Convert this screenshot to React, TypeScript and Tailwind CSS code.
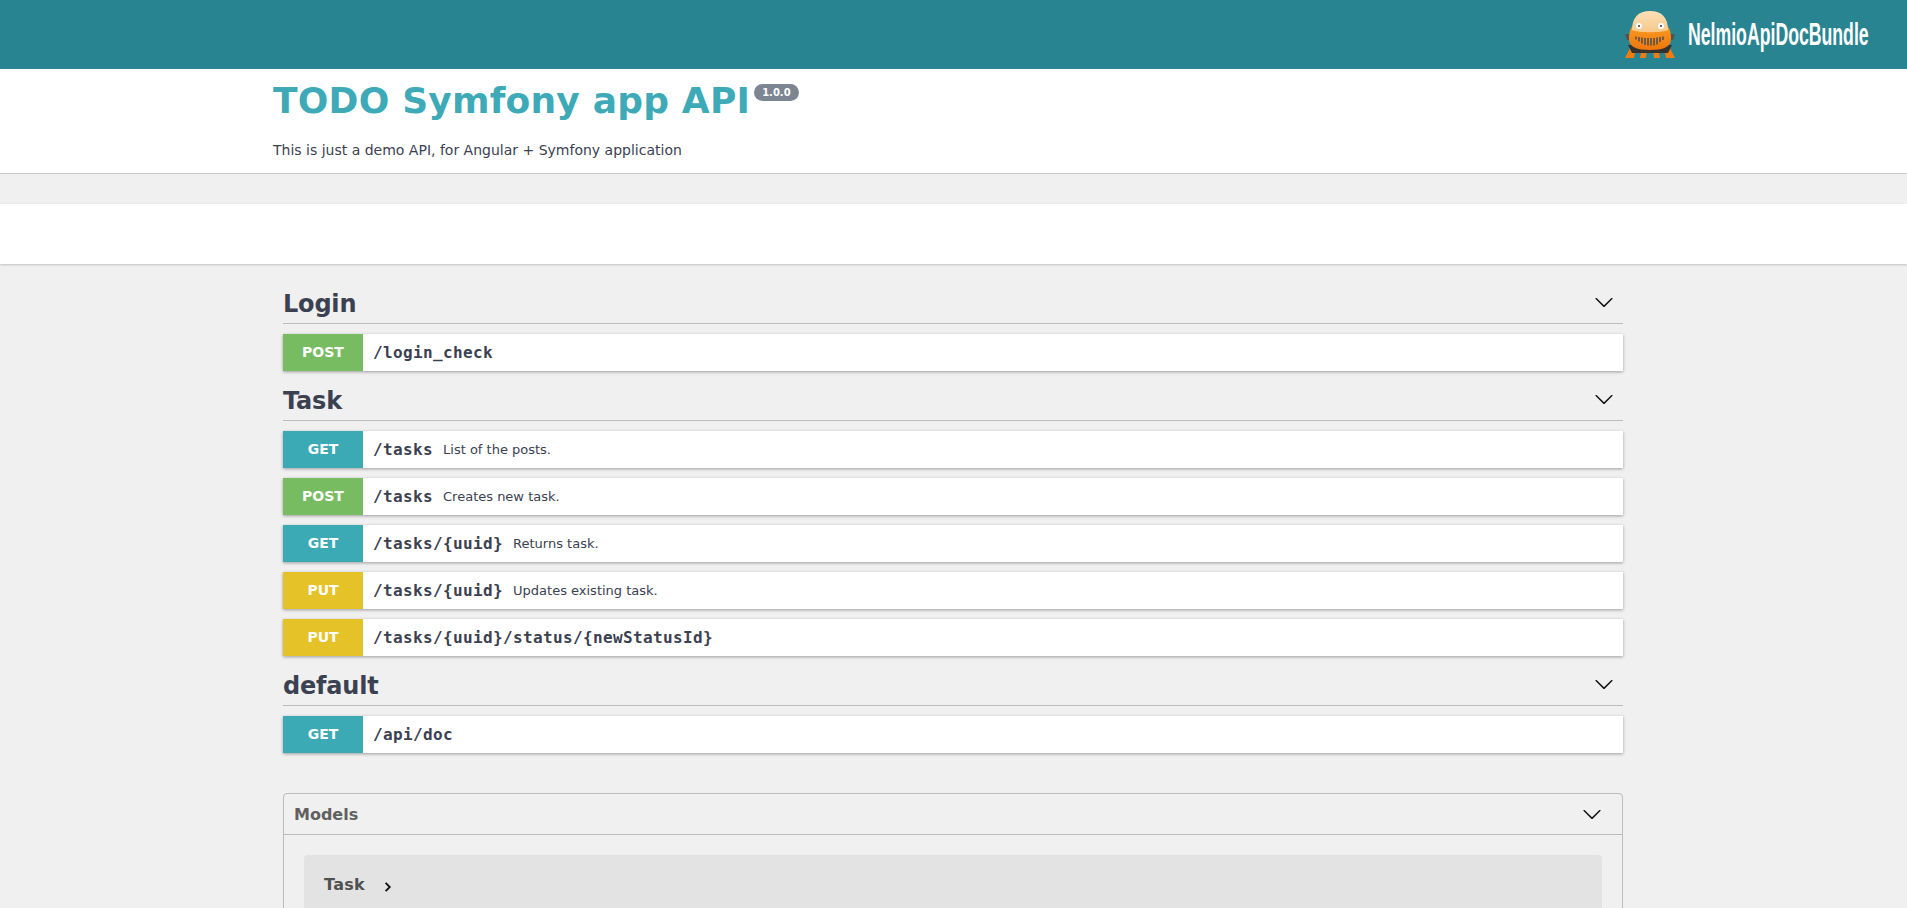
const sans = "font-['DejaVu_Sans',sans-serif]";

const methodColors: Record<string, string> = {
  GET: "bg-[#3caab5]",
  POST: "bg-[#78bc61]",
  PUT: "bg-[#e6c229]",
};

const sections = [
  {
    name: "Login",
    rows: [{ method: "POST", path: "/login_check" }],
  },
  {
    name: "Task",
    rows: [
      { method: "GET", path: "/tasks", summary: "List of the posts." },
      { method: "POST", path: "/tasks", summary: "Creates new task." },
      { method: "GET", path: "/tasks/{uuid}", summary: "Returns task." },
      { method: "PUT", path: "/tasks/{uuid}", summary: "Updates existing task." },
      { method: "PUT", path: "/tasks/{uuid}/status/{newStatusId}" },
    ],
  },
  {
    name: "default",
    rows: [{ method: "GET", path: "/api/doc" }],
  },
];

function Chevron({ className }: { className?: string }) {
  return (
    <svg viewBox="0 0 20 20" className={className} fill="currentColor">
      <path d="M17.418 6.109c.272-.268.709-.268.979 0s.271.701 0 .969l-7.908 7.83c-.27.268-.707.268-.979 0l-7.908-7.83c-.27-.268-.27-.701 0-.969.271-.268.709-.268.979 0L10 13.25l7.418-7.141z" />
    </svg>
  );
}

function Logo() {
  return (
    <svg viewBox="0 0 50 47" className="h-[47px] w-[50px]">
      <defs>
        <linearGradient id="head" x1="0" y1="0" x2="0" y2="1">
          <stop offset="0" stopColor="#fbe0b8" />
          <stop offset="1" stopColor="#f6c88a" />
        </linearGradient>
        <linearGradient id="body" x1="0" y1="0" x2="0" y2="1">
          <stop offset="0" stopColor="#fb9c22" />
          <stop offset="1" stopColor="#ee760c" />
        </linearGradient>
      </defs>
      {/* legs */}
      <path d="M0 47l5-10h6l-2 10zM15 47l2-10h5l-1 10zM29 47l-1-10h5l2 10zM41 47l-2-10h6l5 10z" fill="#f07c10" />
      <path d="M3 34h44l-4 8H7z" fill="#33322f" />
      {/* arms */}
      <path d="M0 23h7v6H2zM50 23h-7v6h5z" fill="#55534e" />
      {/* body and head */}
      <path d="M4 28c0-8 2-12 5-14h32c3 2 5 6 5 14 0 8-8 11-21 11S4 36 4 28z" fill="url(#body)" />
      <path d="M7 19C7 7 13 0 25 0s18 7 18 19c-6 3-30 3-36 0z" fill="url(#head)" />
      <circle cx="14" cy="15" r="3" fill="#fff" />
      <circle cx="36" cy="15" r="3" fill="#fff" />
      <circle cx="14" cy="15" r="1.1" fill="#444" />
      <circle cx="36" cy="15" r="1.1" fill="#444" />
      {/* grille */}
      <path
        d="M11 25.500v3M14 26v4.500M17 26.500v6M20 27v7M23 27v7.500M26 27v7.500M29 27v7.500M32 26.500v7M35 26v5M38 25.500v3.500"
        stroke="#57504a"
        strokeWidth="1.6"
      />
    </svg>
  );
}

function OperationRow({ method, path, summary }: { method: string; path: string; summary?: string }) {
  return (
    <div className="mb-[10px] flex h-[37px] items-center bg-white shadow-[0_1px_3px_rgba(0,0,0,0.35)]">
      <div
        className={`flex h-full w-[80px] items-center justify-center text-[14px] font-bold text-white ${methodColors[method]}`}
      >
        {method}
      </div>
      <span className="ml-[10px] font-['DejaVu_Sans_Mono',monospace] text-[16px] font-bold tracking-[0.37px] text-[#3b4151]">
        {path}
      </span>
      {summary && <span className="ml-[10px] text-[13px] text-[#3b4151]">{summary}</span>}
    </div>
  );
}

export default function App() {
  return (
    <div className={`h-[908px] overflow-hidden bg-[#f0f0f0] ${sans}`}>
      <header className="flex h-[69px] items-center justify-end bg-[#288490] pr-[40px] shadow-[0_1px_2px_rgba(0,0,0,0.3)]">
        <Logo />
        <div className="ml-[13px] w-[179px]">
          <span className="block origin-left scale-x-[0.57] whitespace-nowrap font-['Liberation_Sans_Narrow','Liberation_Sans',sans-serif] text-[31px] leading-none font-bold text-white">
            NelmioApiDocBundle
          </span>
        </div>
      </header>

      <section className="h-[105px] border-b border-[#c8c8c8] bg-white">
        <div className="ml-[273px]">
          <div className="flex items-start pt-[9px]">
            <h1 className="text-[36px] leading-[45px] font-bold tracking-[0.2px] text-[#3eaab7]">
              TODO Symfony app API
            </h1>
            <span className="mt-[6px] ml-[4px] flex h-[17px] items-center rounded-[57px] bg-[#7d8492] px-[8px] text-[10px] font-bold text-white">
              1.0.0
            </span>
          </div>
          <p className="mt-[17px] text-[14px] leading-[20px] text-[#3b4151]">
            This is just a demo API, for Angular + Symfony application
          </p>
        </div>
      </section>

      <div className="mt-[30px] h-[60px] bg-white shadow-[0_1px_2px_rgba(0,0,0,0.2)]" />

      <main className="ml-[283px] w-[1340px] pt-[20px]">
        {sections.map((section) => (
          <div key={section.name}>
            <div className="mb-[10px] flex h-[40px] items-center justify-between border-b border-[#bcbcbe] pr-[9px] text-[#3b4151]">
              <h3 className="text-[24px] leading-[32px] font-bold tracking-[-0.2px]">{section.name}</h3>
              <Chevron className="mb-[3px] h-[20px] w-[20px] text-[#111]" />
            </div>
            {section.rows.map((row, i) => (
              <OperationRow key={i} {...row} />
            ))}
          </div>
        ))}

        <div className="mt-[40px] rounded-[4px] border border-[#bcbcbe]">
          <div className="flex h-[41px] items-center justify-between border-b border-[#bcbcbe] pr-[20px] pl-[10px]">
            <h4 className="mt-[2px] text-[16px] font-bold text-[#606060]">Models</h4>
            <Chevron className="h-[20px] w-[20px] text-[#111]" />
          </div>
          <div className="px-[20px] pt-[20px]">
            <div className="flex h-[60px] items-center rounded-[4px] bg-[#e3e3e3] pl-[20px]">
              <span className="text-[16px] font-bold tracking-[0.3px] text-[#505050]">Task</span>
              <svg viewBox="0 0 20 20" className="mt-[3px] ml-[17px] h-[12px] w-[12px] text-[#111]" fill="none" stroke="currentColor" strokeWidth="3">
                <path d="M6 3l7 7-7 7" />
              </svg>
            </div>
          </div>
        </div>
      </main>
    </div>
  );
}
